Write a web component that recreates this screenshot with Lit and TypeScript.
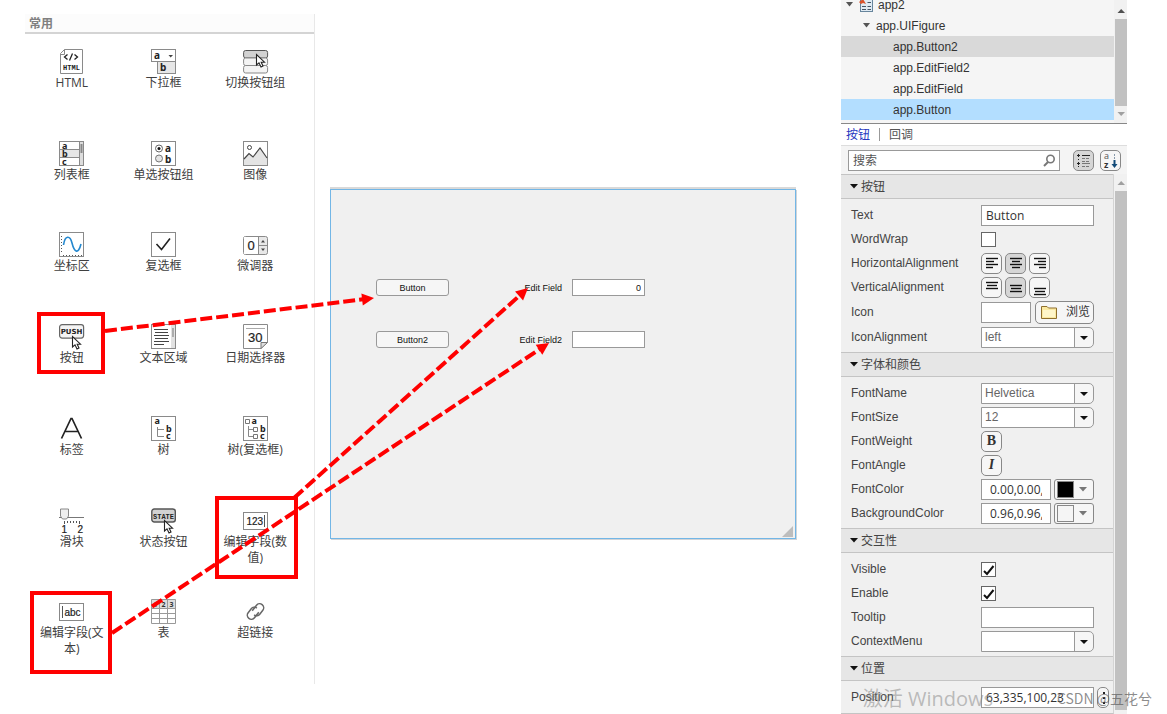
import { LitElement, html, svg, css } from "lit";
import { customElement, property } from "lit/decorators.js";

const cursor = (x: number, y: number) => svg`
  <path d="M0.5 0.5V11L3 8.8L5 13L7 12L5.2 8.2H8.5Z" transform="translate(${x} ${y})" fill="#fff" stroke="#222" stroke-width="1.1"/>`;

const frame = svg`<rect x=".5" y=".5" width="24" height="24" fill="#fff" stroke="#8a8a8a"/>`;

const icons: Record<string, unknown> = {
  html: svg`<path d="M5.500 .5H23.500V24.500H1.500V4.500Z" fill="#fff" stroke="#8a8a8a"/><path d="M5.500 .5V5.500H1.500" fill="none" stroke="#8a8a8a"/>
    <path d="M8.500 5.500L5.500 8L8.500 10.500M15.500 5.500L18.500 8L15.500 10.500M13.500 4.500L10.500 11.500" fill="none" stroke="#222" stroke-width="1.300"/>
    <text x="12.500" y="21" font-size="7" font-weight="bold" font-family="Liberation Mono" text-anchor="middle" fill="#222">HTML</text>`,
  dropdown: svg`<rect x="6.500" y="12.500" width="18" height="12" fill="#e6e6e6" stroke="#8a8a8a"/><rect x=".5" y=".5" width="24" height="12" fill="#fff" stroke="#8a8a8a"/>
    <text x="3" y="9.500" class="g">a</text><text x="9" y="22" class="g">b</text><path d="M17.500 6H22L19.700 8.500Z" fill="#444"/>`,
  toggle: svg`<rect x=".6" y="1.500" width="24" height="7.500" rx="2" fill="#d2d2d2" stroke="#555"/><rect x=".6" y="9" width="24" height="7.500" rx="2" fill="#f4f4f4" stroke="#888"/>
    <rect x=".6" y="16.500" width="24" height="7.500" rx="2" fill="#f4f4f4" stroke="#888"/>${cursor(13, 5)}`,
  list: svg`${frame}<rect x="1" y="9" width="19" height="8" fill="#e6e6e6"/><rect x="20" y="1" width="4" height="23" fill="#ddd"/><path d="M1 8.500H20M1 16.500H20M20.500 1V24" stroke="#8a8a8a"/><path d="M22.500 3V12" stroke="#888" stroke-width="2"/>
    <text x="3" y="7.500" class="s">a</text><text x="3" y="15.500" class="s">b</text><text x="3" y="23.500" class="s">c</text>`,
  radio: svg`${frame}<circle cx="8" cy="7.500" r="3.500" fill="#fff" stroke="#666"/><circle cx="8" cy="7.500" r="1.500" fill="#111"/><circle cx="8" cy="17.500" r="3.500" fill="#e4e4e4" stroke="#777"/>
    <text x="14" y="10.500" class="g">a</text><text x="14" y="21.500" class="g">b</text>`,
  image: svg`${frame}<path d="M1 18L6 12.500L10 16L17 7L24 17V24H1Z" fill="#e4e4e4"/><path d="M1 18L6 12.500L10 16L17 7L24 17" fill="none" stroke="#444" stroke-width="1.200"/><circle cx="6.500" cy="6.500" r="2" fill="none" stroke="#444"/>`,
  axes: svg`${frame}<path d="M2.500 4V22" stroke="#555" stroke-dasharray="1 2"/><path d="M4 23.500H23" stroke="#555" stroke-dasharray="1 2"/><path d="M4.500 13C6 3 11 3 13 11S19 24 22 12" fill="none" stroke="#2488cf" stroke-width="1.600"/>`,
  check: svg`${frame}<path d="M5.500 12L10.500 17.500L19 6.500" fill="none" stroke="#222" stroke-width="1.600"/>`,
  spinner: svg`<rect x=".5" y="4.500" width="24" height="18" rx="2" fill="#e8e8e8" stroke="#8a8a8a"/><path d="M1 5H15V22H1Z" fill="#fff"/><path d="M15.500 5V22M16 13.500H24" stroke="#8a8a8a"/>
    <text x="4.500" y="18" font-size="13" class="n">0</text><path d="M18 10.500H22L20 8ZM18 16.500H22L20 19Z" fill="#444"/>`,
  push: svg`<rect x=".6" y=".6" width="24" height="13.500" rx="2.500" fill="#f4f4f4" stroke="#666" stroke-width="1.200"/>
    <text x="12.500" y="10" font-size="7" font-weight="bold" font-family="DejaVu Sans" text-anchor="middle" fill="#222">PUSH</text>${cursor(13, 12)}`,
  textarea: svg`${frame}<rect x="20" y="1" width="4" height="23" fill="#e2e2e2"/><path d="M22 4V13" stroke="#777"/><path d="M3 5.500H17M4 8.500H17M3 11.500H18M4 14.500H17M3 17.500H18M3 20.500H13" stroke="#444"/>`,
  date: svg`<path d="M.5 .5H24.500V18L18 24.500H.5Z" fill="#fff" stroke="#8a8a8a"/><path d="M18 24.500V18.500H24.500Z" fill="#ddd" stroke="#777"/><path d="M3 4.500H22" stroke="#aaa"/><text x="5" y="18" font-size="13" class="n">30</text>`,
  label: svg`<path d="M2.500 22.500L12 2.500H13L22.500 22.500M6 15.500H19" fill="none" stroke="#222" stroke-width="1.700"/>`,
  tree: svg`${frame}<path d="M6.500 11V20.500H13M6.500 13.500H13" fill="none" stroke="#888"/><text x="3.500" y="8" class="s">a</text><text x="15" y="16" class="s">b</text><text x="15" y="23" class="s">c</text>`,
  checktree: svg`${frame}<path d="M5.500 10V20.500H10M5.500 13.500H10" fill="none" stroke="#888"/><path d="M2.500 3.500H6.500V7.500H2.500ZM10.500 11.500H14.500V15.500H10.500ZM10.500 18.500H14.500V22.500H10.500Z" fill="none" stroke="#777"/>
    <text x="8.500" y="8" class="s">a</text><text x="17" y="16" class="s">b</text><text x="17" y="23" class="s">c</text>`,
  slider: svg`<path d="M0 9.500H25" stroke="#777"/><path d="M1.500 1H9.500V8L7.500 11H3.500L1.500 8Z" fill="#eee" stroke="#888"/><path d="M5.500 13V16M8.500 13V15M11.500 13V15M14.500 13V15M17.500 13V15M20.500 13V16" stroke="#555"/>
    <text x="2.500" y="25" font-size="10" class="n">1</text><text x="18.500" y="25" font-size="10" class="n">2</text>`,
  state: svg`<rect x=".8" y="1" width="23.500" height="13" rx="2.500" fill="#d2d2d2" stroke="#555" stroke-width="1.400"/>
    <text x="12.500" y="10.500" font-size="7" font-weight="bold" font-family="Liberation Mono" text-anchor="middle" fill="#222">STATE</text>${cursor(13, 12)}`,
  number: svg`<rect x=".5" y="4.500" width="24" height="17" fill="#fff" stroke="#888"/><text x="3.500" y="16.500" font-size="10" class="n">123</text><path d="M21.500 7V19" stroke="#555"/>`,
  text: svg`<rect x=".5" y="4.500" width="24" height="17" fill="#fff" stroke="#888"/><text x="5.500" y="16.500" font-size="10" class="n">abc</text><path d="M3.500 7V19" stroke="#555"/>`,
  table: svg`<path d="M.5 .5H24.500V24.500H.5Z" fill="#fff"/><path d="M.5 .5H24.500V9H.5Z" fill="#ddd"/><path d="M.5 .5H24.500V24.500H.5ZM.5 9.500H24.500M.5 14.500H24.500M.5 19.500H24.500M8.500 .5V24.500M16.500 .5V24.500" fill="none" stroke="#999"/>
    <text x="2.500" y="7.500" class="t">1</text><text x="10.500" y="7.500" class="t">2</text><text x="18.500" y="7.500" class="t">3</text>`,
  link: svg`<g transform="rotate(-52 12.500 12.500)" fill="none" stroke="#666" stroke-width="1.500"><path d="M14 15.500H7A4 4 0 0 1 7 7.500H12A4 4 0 0 1 16 11.500"/><path d="M11 9.500H18A4 4 0 0 1 18 17.500H13A4 4 0 0 1 9 13.500"/></g>`,
};

const tiles: [string, string][] = [
  ["html", "HTML"], ["dropdown", "下拉框"], ["toggle", "切换按钮组"],
  ["list", "列表框"], ["radio", "单选按钮组"], ["image", "图像"],
  ["axes", "坐标区"], ["check", "复选框"], ["spinner", "微调器"],
  ["push", "按钮"], ["textarea", "文本区域"], ["date", "日期选择器"],
  ["label", "标签"], ["tree", "树"], ["checktree", "树(复选框)"],
  ["slider", "滑块"], ["state", "状态按钮"], ["number", "编辑字段(数值)"],
  ["text", "编辑字段(文本)"], ["table", "表"], ["link", "超链接"],
];

@customElement("component-palette")
class ComponentPalette extends LitElement {
  static styles = css`
    :host { display: block; box-sizing: border-box; border-right: 1px solid #e8e8e8; font: 12px/16px "Open Sans", "Noto Sans CJK SC", sans-serif; color: #404040; }
    .title { margin: 0; padding: 0 4px; height: 18px; font-size: 12px; line-height: 20px; font-weight: 700; color: #808080; background: #fcfcfc; border-bottom: 2px solid #d4d4d4; }
    .grid { display: grid; grid-template-columns: repeat(3, 1fr); grid-auto-rows: 1fr; min-height: 642px; padding: 2px 13px 6px 1px; }
    .tile { display: flex; flex-direction: column; align-items: center; gap: 1px; padding: 13px 0 0; border: 0; background: none; font: inherit; color: inherit; }
    .tile span { max-width: 70px; }
    svg { display: block; width: 25px; height: 25px; flex: none; overflow: visible; }
    .g { font: bold 10px "Noto Sans", sans-serif; fill: #222; }
    .s { font: bold 9px "Noto Sans", sans-serif; fill: #222; }
    .t { font: bold 7px "Noto Sans", sans-serif; fill: #333; }
    .n { font-family: "Liberation Sans", sans-serif; fill: #222; stroke: #222; stroke-width: .2px; }
  `;
  render() {
    return html`<h2 class="title">常用</h2>
      <div class="grid">${tiles.map(([icon, label]) => html`
        <button class="tile"><svg viewBox="0 0 25 25" aria-hidden="true">${icons[icon]}</svg><span>${label}</span></button>`)}
      </div>`;
  }
}

@customElement("design-canvas")
class DesignCanvas extends LitElement {
  static styles = css`
    :host { display: block; position: relative; box-sizing: border-box; height: 350px; background: #f0f0f0; border: 1px solid #72b6e6; box-shadow: 0 -2px 0 #d9d9d9, 1px 1px 0 #d0d4d8; font: 9px/18px "Liberation Sans", sans-serif; color: #111; }
    .widget { position: absolute; box-sizing: border-box; width: 73px; height: 17px; font: inherit; color: inherit; }
    button.widget { left: 45px; padding: 0; line-height: 14px; background: #f6f6f6; border: 1px solid #999; border-radius: 3px; }
    input.widget { left: 241px; padding: 0 3px; background: #fff; border: 1px solid #999; }
    label.widget { left: 158px; text-align: right; }
    .first { top: 89px; }
    .second { top: 141px; }
    .number { text-align: right; }
    .grip { position: absolute; right: 2px; bottom: 1px; width: 11px; height: 11px; }
  `;
  render() {
    return html`
      <button class="widget first">Button</button>
      <button class="widget second">Button2</button>
      <label class="widget first" for="ef">Edit Field</label>
      <input class="widget first number" id="ef" value="0">
      <label class="widget second" for="ef2">Edit Field2</label>
      <input class="widget second" id="ef2">
      <svg class="grip" viewBox="0 0 11 11"><path d="M11 0V11H0Z" fill="#bdbdbd"/></svg>`;
  }
}

@customElement("scroll-track")
class ScrollTrack extends LitElement {
  @property({ type: Boolean }) down = false;
  @property({ type: Boolean }) dim = false;
  static styles = css`
    :host { display: flex; flex-direction: column; width: 13px; box-sizing: border-box; padding: 0 0 4px 1px; background: #f1f1f1; }
    :host([down]) { padding: 2px 0 0 1px; }
    svg { display: block; width: 12px; height: 17px; flex: none; }
    .thumb { flex: 1; background: #c1c1c1; }
  `;
  render() {
    return html`<svg viewBox="0 0 12 17"><path d="M2.500 11H10L6.200 7Z" fill=${this.dim ? "#a0a0a0" : "#505050"}/></svg>
      <div class="thumb"></div>
      ${this.down ? html`<svg viewBox="0 0 12 17"><path d="M2.500 6H10L6.200 10Z" fill="#a0a0a0"/></svg>` : null}`;
  }
}

const lines = (rows: [number, number, number][]) => html`<svg class="glyph" viewBox="0 0 19 19">
  ${rows.map(([x, y, w]) => svg`<path d="M${x} ${y}.5H${x + w}" stroke="#111" stroke-width="1.400"/>`)}</svg>`;

@customElement("property-inspector")
class PropertyInspector extends LitElement {
  static styles = css`
    :host { display: flex; flex-direction: column; overflow: hidden; background: #f0f0f0; font: 12px/16px "Liberation Sans", "Noto Sans CJK SC", sans-serif; color: #444; }
    .browser { display: flex; height: 124px; background: #f5f5f5; border-bottom: 1px solid #888; box-sizing: border-box; overflow: hidden; }
    .tree { flex: 1; list-style: none; margin: -6px 0 0; padding: 0; color: #333; }
    .node { display: flex; align-items: center; height: 21px; box-sizing: border-box; }
    .root { padding-left: 5px; }
    .figure { padding-left: 22px; }
    .leaf { padding-left: 52px; }
    .hover { background: #d9d9d9; }
    .selected { background: #b3deff; }
    .fold { width: 7px; height: 5px; margin-right: 6px; fill: #555; }
    .appicon { width: 14px; height: 14px; margin-right: 5px; }
    .tabs { display: flex; align-items: center; gap: 9px; height: 22px; padding: 0 5px; background: #fff; border-bottom: 1px solid #ddd; box-sizing: border-box; }
    .tab { border: 0; padding: 0; background: none; font: inherit; color: #555; }
    .active { color: #2637c0; }
    .rule { width: 1px; height: 13px; background: #999; }
    .search { display: flex; align-items: center; height: 28px; padding: 0 6px 0 7px; background: #f4f4f4; box-sizing: border-box; }
    .find { position: relative; flex: 1; margin-right: 13px; }
    .find input { width: 100%; }
    .find svg { position: absolute; right: 4px; top: 4px; width: 13px; height: 13px; }
    .find input::placeholder { color: #555; opacity: 1; }
    .scroller { display: flex; flex: 1; }
    .sections { flex: 1; border-bottom: 1px solid #c4c4c4; border-right: 1px solid #d4d4d4; }
    .head { display: flex; align-items: center; height: 25px; box-sizing: border-box; margin: 0; padding-left: 9px; font-size: 12px; font-weight: 400; background: #e6e6e6; border-top: 1px solid #c4c4c4; border-bottom: 1px solid #c4c4c4; }
    .head svg { width: 8px; height: 5px; margin-right: 3px; }
    .body { padding: 4px 0 3px; }
    .row { display: grid; grid-template-columns: 130px 1fr; align-items: center; height: 24px; padding: 0 0 0 10px; }
    .tall { height: 26px; }
    .controls { display: flex; align-items: center; }
    input, select, .btn { box-sizing: border-box; margin: 0; height: 21px; border: 1px solid #999; font: 12px/16px "Open Sans", "Noto Sans CJK SC", sans-serif; color: #333; background: #fff; }
    input { padding: 0 4px; }
    select, .wide { width: 113px; }
    select { appearance: none; padding: 0 22px 0 3px; font-family: "Liberation Sans", sans-serif; color: #666; border-radius: 0 5px 5px 0; background: #fff url("data:image/svg+xml,%3Csvg xmlns='http://www.w3.org/2000/svg' width='19' height='19'%3E%3Cpath d='M0 0H19V19H0Z' fill='%23f6f6f6'/%3E%3Cpath d='M.5 0V19' stroke='%23999'/%3E%3Cpath d='M6 8H14L10 12Z' fill='%23111'/%3E%3C/svg%3E") right center no-repeat; }
    input[type="checkbox"] { appearance: none; width: 15px; height: 15px; border-color: #666; padding: 0; }
    input[type="checkbox"]:checked { background: #fff url("data:image/svg+xml,%3Csvg xmlns='http://www.w3.org/2000/svg' width='13' height='13'%3E%3Cpath d='M2 8L5 11L11.500 3' fill='none' stroke='%23111' stroke-width='2'/%3E%3C/svg%3E") center no-repeat; }
    .icon { width: 50px; margin-right: 4px; }
    .color { width: 70px; margin-right: 3px; padding: 0 8px; }
    .btn { display: flex; align-items: center; justify-content: center; padding: 0; width: 21px; border-color: #888; border-radius: 5px; background: #f6f6f6; }
    .set { gap: 3px; }
    .on { background: #d6d6d6; }
    .glyph { width: 19px; height: 19px; flex: none; }
    .serif { font: bold 14px/16px "Liberation Serif", serif; }
    .italic { font-style: italic; }
    .browse { width: 59px; height: 23px; justify-content: space-between; padding: 0 3px 0 5px; }
    .browse svg { width: 16px; height: 14px; }
    .swatch { width: 40px; border-radius: 3px; justify-content: space-between; padding: 0 6px 0 2px; }
    .chip { width: 17px; height: 17px; box-sizing: border-box; border: 1px solid #888; }
    .black { background: #000; }
    .pale { background: #f5f5f5; }
    .swatch svg { width: 8px; height: 5px; fill: #777; }
    .spin { width: 12px; margin-left: 3px; }
    .sort { gap: 6px; display: flex; }
  `;
  fold = html`<svg class="fold" viewBox="0 0 7 5"><path d="M0 0H7L3.500 4.500Z"/></svg>`;
  section(title: string, rows: unknown) {
    return html`<section><h3 class="head"><svg viewBox="0 0 8 5"><path d="M0 0H8L4 4.500Z" fill="#111"/></svg>${title}</h3><div class="body">${rows}</div></section>`;
  }
  row(name: string, control: unknown, tall = false) {
    return html`<div class="row ${tall ? "tall" : ""}"><label for=${name}>${name}</label><div class="controls">${control}</div></div>`;
  }
  select(id: string, value: string) {
    return html`<select id=${id}><option>${value}</option></select>`;
  }
  color(id: string, value: string, chip: string) {
    return html`<input class="color" id=${id} .value=${value}><button class="btn swatch" aria-label="${id} picker"><span class="chip ${chip}"></span><svg viewBox="0 0 8 5"><path d="M0 0H8L4 4.500Z"/></svg></button>`;
  }
  render() {
    return html`
      <div class="browser">
        <ul class="tree">
          <li class="node root">${this.fold}<svg class="appicon" viewBox="0 0 14 14"><rect x="1.500" y="1.500" width="12" height="12" fill="#dfeaf3" stroke="#67859c"/><path d="M3 11.500H7M8.500 11.500H12M3 8.500H7M8.500 8.500H12M8.500 4.500H12" stroke="#456" stroke-width="1.200"/><path d="M0 4L4 1L7 6L4 5L2 6Z" fill="#d9532c"/></svg>app2</li>
          <li class="node figure">${this.fold}app.UIFigure</li>
          <li class="node leaf hover">app.Button2</li>
          <li class="node leaf">app.EditField2</li>
          <li class="node leaf">app.EditField</li>
          <li class="node leaf selected">app.Button</li>
        </ul>
        <scroll-track down></scroll-track>
      </div>
      <div class="tabs"><button class="tab active">按钮</button><span class="rule"></span><button class="tab">回调</button></div>
      <div class="search">
        <div class="find"><input placeholder="搜索" aria-label="搜索"><svg viewBox="0 0 13 13"><circle cx="7.500" cy="5" r="3.700" fill="none" stroke="#777" stroke-width="1.600"/><path d="M5 8L1 12" stroke="#777" stroke-width="2"/></svg></div>
        <div class="sort">
          <button class="btn on" aria-label="Group"><svg class="glyph" viewBox="0 0 19 19"><path d="M3 4.500H6M4.500 3V6M3 12.500H6M4.500 11V14M4 8.500H5M4 15.500H5" stroke="#222"/><path d="M8 4.500H16" stroke="#222"/><path d="M8 7.500H11M12 7.500H15M8 10.500H11M12 10.500H15M8 12.500H16M8 15.500H11M12 15.500H15" stroke="#777"/></svg></button>
          <button class="btn" aria-label="Sort"><svg class="glyph" viewBox="0 0 19 19"><text x="3" y="8" font-size="9" fill="#555">a</text><text x="3" y="17" font-size="9" font-weight="bold" fill="#333">z</text><path d="M13.500 3V9" stroke="#89a" stroke-dasharray="2 1"/><path d="M13.500 9V14" stroke="#124a78" stroke-width="2"/><path d="M10.500 13H16.500L13.500 17Z" fill="#124a78"/></svg></button>
        </div>
      </div>
      <div class="scroller">
        <div class="sections">
          ${this.section("按钮", html`
            ${this.row("Text", html`<input class="wide" id="Text" value="Button">`)}
            ${this.row("WordWrap", html`<input type="checkbox" id="WordWrap">`)}
            ${this.row("HorizontalAlignment", html`<div class="controls set">
              <button class="btn" id="HorizontalAlignment" aria-label="left">${lines([[4, 4, 12], [4, 7, 8], [4, 10, 12], [4, 13, 7]])}</button>
              <button class="btn on" aria-label="center">${lines([[4, 4, 12], [6, 7, 8], [4, 10, 12], [6, 13, 8]])}</button>
              <button class="btn" aria-label="right">${lines([[4, 4, 12], [8, 7, 8], [4, 10, 12], [9, 13, 7]])}</button></div>`)}
            ${this.row("VerticalAlignment", html`<div class="controls set">
              <button class="btn" id="VerticalAlignment" aria-label="top">${lines([[4, 4, 12], [5, 7, 10], [4, 10, 12]])}</button>
              <button class="btn on" aria-label="middle">${lines([[4, 7, 12], [5, 10, 10], [4, 13, 12]])}</button>
              <button class="btn" aria-label="bottom">${lines([[4, 10, 12], [5, 13, 10], [4, 16, 12]])}</button></div>`)}
            ${this.row("Icon", html`<input class="icon" id="Icon"><button class="btn browse"><svg viewBox="0 0 16 14"><path d="M.5 1.500H6L7.500 3H15.500V13.500H.5Z" fill="#fbe9a0" stroke="#8f6f2c"/><path d="M2 5H14V12H2Z" fill="#fff6c9"/></svg>浏览</button>`, true)}
            ${this.row("IconAlignment", this.select("IconAlignment", "left"))}`)}
          ${this.section("字体和颜色", html`
            ${this.row("FontName", this.select("FontName", "Helvetica"))}
            ${this.row("FontSize", this.select("FontSize", "12"))}
            ${this.row("FontWeight", html`<button class="btn serif" id="FontWeight">B</button>`)}
            ${this.row("FontAngle", html`<button class="btn serif italic" id="FontAngle">I</button>`)}
            ${this.row("FontColor", this.color("FontColor", "0.00,0.00,0.00", "black"))}
            ${this.row("BackgroundColor", this.color("BackgroundColor", "0.96,0.96,0.96", "pale"))}`)}
          ${this.section("交互性", html`
            ${this.row("Visible", html`<input type="checkbox" id="Visible" checked>`)}
            ${this.row("Enable", html`<input type="checkbox" id="Enable" checked>`)}
            ${this.row("Tooltip", html`<input class="wide" id="Tooltip">`)}
            ${this.row("ContextMenu", this.select("ContextMenu", ""))}`)}
          ${this.section("位置", this.row("Position", html`<input class="wide" id="Position" value="63,335,100,23"><button class="btn spin" aria-label="More"><svg class="glyph" viewBox="0 0 19 19"><path d="M9 4H11V6H9ZM9 9H11V11H9ZM9 14H11V16H9Z" fill="#222"/></svg></button>`))}
        </div>
        <scroll-track dim></scroll-track>
      </div>`;
  }
}

@customElement("app-root")
class AppRoot extends LitElement {
  static styles = css`
    :host { display: grid; grid-template-columns: 290px minmax(0, 1fr) 286px; position: relative; box-sizing: border-box; min-height: 100vh; padding: 0 40px 0 25px; background: #fff; overflow: hidden; }
    component-palette { align-self: start; margin-top: 14px; }
    design-canvas { align-self: start; margin: 189px 45px 0 15px; }
    .marks { position: absolute; left: 0; top: 0; width: 1167px; height: 714px; pointer-events: none; }
    .box { fill: none; stroke: #f00; stroke-width: 4px; }
    .line { stroke: #f00; stroke-width: 4px; stroke-dasharray: 12 4; }
    .tip { fill: #f00; }
    .note { position: absolute; pointer-events: none; white-space: nowrap; font-family: "Open Sans", "Noto Sans CJK SC", sans-serif; }
    .activate { right: 174px; bottom: 2px; font-size: 20px; line-height: 26px; color: rgba(130, 130, 130, .5); }
    .credit { right: 15px; bottom: 6px; font-family: "Noto Sans CJK SC", sans-serif; font-size: 14px; line-height: 20px; color: rgba(90, 90, 90, .7); }
  `;
  render() {
    const arrows = [[105, 331, 374, 298], [294, 498, 528, 288], [112, 633, 549, 343]];
    return html`
      <component-palette></component-palette>
      <design-canvas></design-canvas>
      <property-inspector></property-inspector>
      <svg class="marks" viewBox="0 0 1167 714" aria-hidden="true">
        <rect class="box" x="39" y="314" width="64" height="58"/>
        <rect class="box" x="217" y="498" width="79" height="79"/>
        <rect class="box" x="32" y="593" width="78" height="79"/>
        ${arrows.map(([x1, y1, x2, y2]) => {
          const length = Math.hypot(x2 - x1, y2 - y1);
          const angle = (Math.atan2(y2 - y1, x2 - x1) * 180) / Math.PI;
          return svg`<g transform="translate(${x1} ${y1}) rotate(${angle})"><path class="line" d="M0 0H${length - 11}"/><path class="tip" d="M${length} 0L${length - 12} -6V6Z"/></g>`;
        })}
      </svg>
      <span class="note activate">激活 Windows</span>
      <span class="note credit">CSDN @五花兮</span>`;
  }
}
